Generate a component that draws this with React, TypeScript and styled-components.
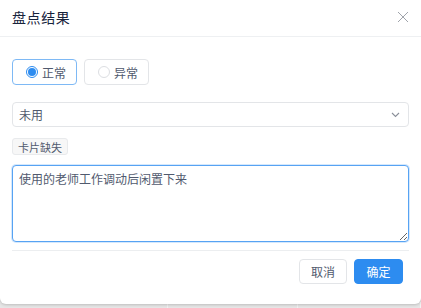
import React from "react";
import styled, { createGlobalStyle } from "styled-components";

const Global = createGlobalStyle`
  html, body { margin: 0; padding: 0; }
  body {
    width: 421px;
    height: 308px;
    overflow: hidden;
    background: #e4e4e4;
    font-family: "Noto Sans CJK SC", "Noto Sans", sans-serif;
  }
`;

const Page = styled.div`
  width: 421px;
  height: 308px;
  overflow: hidden;
  display: flex;
  flex-direction: column;
`;

const Dialog = styled.div`
  width: 421px;
  height: 304px;
  flex: none;
  background: #fff;
  border-radius: 0 0 6px 6px;
  box-shadow: 0 1px 3px rgba(0, 0, 0, 0.18);
  display: flex;
  flex-direction: column;
  position: relative;
  z-index: 1;
`;

const Header = styled.div`
  height: 33px;
  padding: 0 12px 3px 12px;
  border-bottom: 1px solid #eef0f2;
  display: flex;
  align-items: center;
  justify-content: space-between;
`;

const Title = styled.div`
  font-size: 14px;
  color: #17233c;
  letter-spacing: 0.6px;
`;

const Close = styled.button`
  border: 0;
  background: none;
  padding: 0;
  margin-right: 0;
  width: 12px;
  height: 12px;
  display: flex;
  cursor: pointer;
`;

const Body = styled.div`
  padding: 22px 12px 0 12px;
  display: flex;
  flex-direction: column;
`;

const RadioGroup = styled.div`
  display: flex;
  gap: 7px;
`;

const RadioBox = styled.label<{ $checked?: boolean }>`
  box-sizing: border-box;
  width: 65px;
  height: 26px;
  border: 1px solid ${(p) => (p.$checked ? "#7eb9f5" : "#e3e5e8")};
  border-radius: 4px;
  display: flex;
  align-items: center;
  padding-left: 13px;
  gap: 4px;
  font-size: 12px;
  color: #515a6e;
`;

const Dot = styled.span<{ $checked?: boolean }>`
  box-sizing: border-box;
  width: 12px;
  height: 12px;
  border-radius: 50%;
  border: 1px solid ${(p) => (p.$checked ? "#2d8cf0" : "#dcdee2")};
  display: flex;
  align-items: center;
  justify-content: center;
  &::after {
    content: "";
    width: 8px;
    height: 8px;
    border-radius: 50%;
    background: ${(p) => (p.$checked ? "#2d8cf0" : "transparent")};
  }
`;

const Select = styled.div`
  box-sizing: border-box;
  margin-top: 17px;
  height: 25px;
  border: 1px solid #e3e5e8;
  border-radius: 4px;
  display: flex;
  align-items: center;
  justify-content: space-between;
  padding: 0 8px 0 6px;
  font-size: 12px;
  color: #515a6e;
`;

const Tag = styled.span`
  box-sizing: border-box;
  align-self: flex-start;
  margin-top: 11px;
  height: 17px;
  padding: 0 5px;
  background: #f7f7f7;
  border: 1px solid #e8eaec;
  border-radius: 3px;
  font-size: 11px;
  color: #515a6e;
  display: flex;
  align-items: center;
`;

const TextArea = styled.textarea`
  box-sizing: border-box;
  margin-top: 10px;
  width: 397px;
  height: 77px;
  border: 1px solid #57a3f3;
  border-radius: 4px;
  box-shadow: 0 0 0 1px rgba(45, 140, 240, 0.2);
  outline: none;
  padding: 4px 6px;
  font-family: "Noto Sans CJK SC", "Noto Sans", sans-serif;
  font-size: 12px;
  line-height: 18px;
  color: #515a6e;
  resize: vertical;
`;

const Divider = styled.div`
  margin-top: 8px;
  height: 1px;
  background: #eceef0;
`;

const Footer = styled.div`
  padding: 8px 18px 0 12px;
  display: flex;
  justify-content: flex-end;
  gap: 7px;
`;

const Button = styled.button<{ $primary?: boolean }>`
  box-sizing: border-box;
  width: ${(p) => (p.$primary ? "49px" : "48px")};
  height: 25px;
  border-radius: 4px;
  border: 1px solid ${(p) => (p.$primary ? "#2d8cf0" : "#e3e5e8")};
  background: ${(p) => (p.$primary ? "#2d8cf0" : "#fff")};
  color: ${(p) => (p.$primary ? "#fff" : "#515a6e")};
  font-family: "Noto Sans CJK SC", "Noto Sans", sans-serif;
  font-size: 12px;
  padding: 0;
  cursor: pointer;
`;

const Behind = styled.div`
  flex: none;
  height: 20px;
  margin-top: -2px;
  display: grid;
  grid-template-columns: 168px 130px 1fr;
  background: #e6e6e6;
`;

const Cell = styled.div`
  border-right: 1px solid #f2f2f2;
  font-size: 12px;
  color: #333;
  padding: 5px 0 0 52px;
`;

export default function App() {
  return (
    <>
      <Global />
      <Page>
        <Dialog>
          <Header>
            <Title>盘点结果</Title>
            <Close aria-label="close">
              <svg width="12" height="12" viewBox="0 0 12 12">
                <path d="M1 1 L11 11 M11 1 L1 11" stroke="#a0a4ab" strokeWidth="1" />
              </svg>
            </Close>
          </Header>
          <Body>
            <RadioGroup>
              <RadioBox $checked>
                <Dot $checked />
                正常
              </RadioBox>
              <RadioBox>
                <Dot />
                异常
              </RadioBox>
            </RadioGroup>
            <Select>
              <span>未用</span>
              <svg width="9" height="6" viewBox="0 0 9 6">
                <path d="M1 1 L4.5 4.5 L8 1" fill="none" stroke="#8a8f99" strokeWidth="1.1" />
              </svg>
            </Select>
            <Tag>卡片缺失</Tag>
            <TextArea defaultValue="使用的老师工作调动后闲置下来" />
            <Divider />
          </Body>
          <Footer>
            <Button>取消</Button>
            <Button $primary>确定</Button>
          </Footer>
        </Dialog>
        <Behind>
          <Cell />
          <Cell>资产名称</Cell>
          <Cell />
        </Behind>
      </Page>
    </>
  );
}
